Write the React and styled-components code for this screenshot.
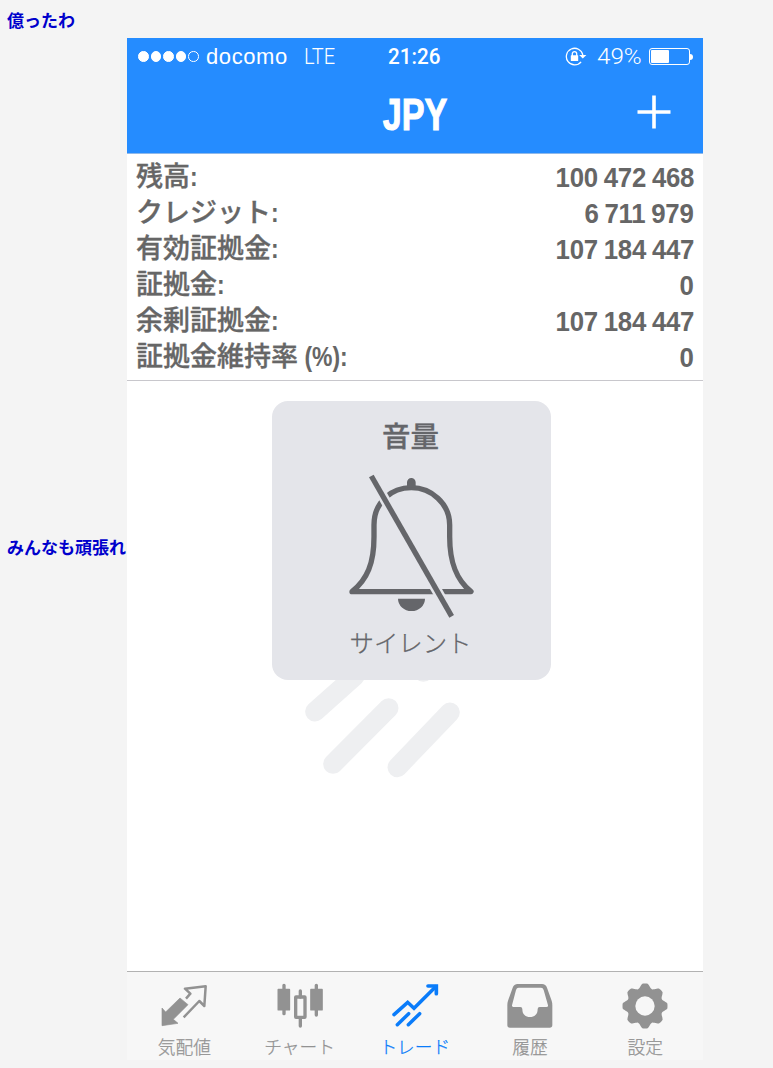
import React from "react";
import styled, { createGlobalStyle } from "styled-components";

const Global = createGlobalStyle`
  * { box-sizing: border-box; }
  body { margin: 0; background: #f4f4f4; }
`;

const sans = `"Liberation Sans", "Noto Sans CJK JP", sans-serif`;
const jp = `"Noto Sans CJK JP", sans-serif`;

const Page = styled.div`
  width: 773px;
  height: 1068px;
  padding-left: 7px;
  overflow: hidden;
  background: #f4f4f4;
`;

const LinkLine = styled.a`
  display: block;
  width: 120px;
  flex: none;
  padding-bottom: ${(p) => p.$lift || 0}px;
  font: bold 17px/20px ${jp};
  color: #0000cc;
  white-space: nowrap;
`;

const TopLine = styled.div`
  height: 38px;
  padding-top: 10px;
`;

const Row = styled.div`
  display: flex;
  align-items: center;
`;

const Phone = styled.div`
  display: flex;
  flex-direction: column;
  width: 576px;
  height: 1022px;
  background: #fff;
`;

const Header = styled.header`
  height: 116px;
  flex: none;
  background: #258cff;
  border-bottom: 1px solid #8fb9ea;
  color: #fff;
`;

const StatusBar = styled.div`
  display: grid;
  grid-template-columns: 1fr auto 1fr;
  align-items: center;
  height: 37px;
  padding: 0 10px 0 11px;
`;

const StatusGroup = styled.div`
  display: flex;
  align-items: center;
  justify-content: ${(p) => (p.$end ? "flex-end" : "flex-start")};
`;

const Dot = styled.span`
  width: 10.6px;
  height: 10.6px;
  margin-right: 2px;
  border-radius: 50%;
  border: 1px solid #fff;
  background: ${(p) => (p.$on ? "#fff" : "transparent")};
`;

const StatusText = styled.span`
  display: block;
  width: ${(p) => p.$w}px;
  margin-left: ${(p) => p.$gap || 0}px;
  font: ${(p) => p.$weight || 300} ${(p) => p.$size || 21}px/24px ${(p) => p.$family || "Roboto, sans-serif"};
  letter-spacing: ${(p) => p.$track || 0}px;
  white-space: nowrap;
  transform: scaleX(${(p) => p.$sx || 1});
  transform-origin: left center;
`;

const Battery = styled.div`
  width: 41px;
  height: 17px;
  margin-left: 7px;
  padding: 1px;
  border: 1px solid #fff;
  border-radius: 3px;
`;

const Charge = styled.div`
  width: 18px;
  height: 13px;
  border-radius: 1px;
  background: #fff;
`;

const BatteryTip = styled.div`
  width: 3px;
  height: 6px;
  border-radius: 0 3px 3px 0;
  background: #fff;
`;

const NavBar = styled.div`
  display: grid;
  grid-template-columns: 1fr auto 1fr;
  align-items: center;
  height: 78px;
  padding-right: 32px;
`;

const Title = styled.h1`
  grid-column: 2;
  margin: 2px -16px 0 16px;
  font: bold 43.5px/50px ${sans};
  -webkit-text-stroke: 1px #fff;
  transform: scaleX(0.785);
`;

const PlusIcon = styled.svg`
  justify-self: end;
  margin-top: -5px;
`;

const Summary = styled.section`
  height: 227px;
  flex: none;
  padding: 4px 9px 0;
  border-bottom: 1px solid #c8c7cc;
  color: #666;
`;

const SummaryRow = styled.div`
  display: flex;
  justify-content: space-between;
  height: 36px;
`;

const Label = styled.span`
  font: 500 27px/33px ${jp};
  -webkit-text-stroke: 0.35px #666;
  white-space: pre;
`;

const LabelTail = styled.span`
  display: inline-block;
  font: bold 27px/33px ${sans};
  -webkit-text-stroke: 0;
  transform: scaleX(0.85);
  transform-origin: left center;
`;

const Value = styled.span`
  font: bold 28.5px/38px ${sans};
  letter-spacing: -0.3px;
  word-spacing: -1px;
  white-space: nowrap;
  transform: scaleX(0.905);
  transform-origin: right center;
`;

const Content = styled.main`
  position: relative;
  flex: 1;
  padding: 20px 0 0 145px;
`;

const Watermark = styled.svg`
  position: absolute;
  left: 173px;
  top: 279px;
`;

const Hud = styled.div`
  position: relative;
  display: flex;
  flex-direction: column;
  align-items: center;
  width: 279px;
  height: 278.5px;
  padding: 16px 2px 0 0;
  border-radius: 16px;
  background: #e4e5ea;
  color: #65666a;
`;

const HudTitle = styled.div`
  font: 500 28.5px/36px ${jp};
  -webkit-text-stroke: 0.3px #65666a;
`;

const HudText = styled.div`
  margin-top: 4px;
  font: 300 24.4px/36px ${jp};
  -webkit-text-stroke: 0.3px #65666a;
`;

const BellIcon = styled.svg`
  margin-top: 20px;
  flex: none;
`;

const TabBar = styled.nav`
  display: flex;
  height: 89px;
  flex: none;
  border-top: 1px solid #b2b2b2;
  background: #f7f7f7;
`;

const Tab = styled.div`
  display: flex;
  flex: 1;
  flex-direction: column;
  align-items: center;
  padding: 9px 0.4px 0 0;
  color: ${(p) => (p.$active ? "#0a7cfa" : "#929292")};
`;

const TabLabel = styled.span`
  margin-top: 4px;
  font: 300 17.7px/26px ${jp};
  -webkit-text-stroke: 0.25px currentColor;
  white-space: nowrap;
`;

// Eight rounded teeth: a cosine-modulated radius, flattened at the tips.
const gearPoints = Array.from({ length: 160 }, (_, k) => {
  const t = (k / 160) * Math.PI * 2;
  const r = Math.min(67.5, 62.5 + 8 * Math.cos(8 * t));
  return `${(72 + r * Math.sin(t)).toFixed(1)},${(75 - r * Math.cos(t)).toFixed(1)}`;
}).join(" ");

const icons = {
  quotes: (
    <>
      <path d="M60 51 84 71 40 115 54 127 6 134 6 81 17 93Z" fill="currentColor" stroke="currentColor" strokeWidth="2" strokeLinejoin="round" />
      <path d="M78 53 91 38 75 23 137 16 133 75 118 60 71 109" fill="none" stroke="currentColor" strokeWidth="7.5" strokeLinejoin="round" />
    </>
  ),
  chart: (
    <g stroke="currentColor" strokeLinecap="round" fill="none">
      <path d="M24 13V98M121 13V102M73 30V48M73 110V135" strokeWidth="10" />
      <rect x="7" y="26" width="33" height="60" fill="currentColor" strokeWidth="5" strokeLinejoin="round" />
      <rect x="105" y="26" width="33" height="60" fill="currentColor" strokeWidth="5" strokeLinejoin="round" />
      <rect x="59" y="48" width="28" height="61" rx="1" strokeWidth="10" />
    </g>
  ),
  trade: (
    <g stroke="currentColor" strokeLinecap="round" fill="none">
      <path d="M9 101 50 64 69 82 134 17M19 131 53 98M52 131 86 98" strokeWidth="10.5" />
      <path d="M111 15H136V38" strokeWidth="11" />
    </g>
  ),
  history: (
    <path
      fill="currentColor"
      fillRule="evenodd"
      d="M35 9H108Q119 9 123 20L137 59Q139 65 139 73V132Q139 140 131 140H12Q4 140 4 132V73Q4 65 6 59L20 20Q24 9 35 9ZM38 20Q32 20 30 27L18 73Q17 78 22 78H43Q49 78 49 84C49 101 59 108 72 108S95 101 95 84Q95 78 101 78H121Q127 78 126 73L113 27Q111 20 105 20Z"
    />
  ),
  settings: (
    <>
      <polygon points={gearPoints} fill="currentColor" />
      <circle cx="72" cy="75" r="29" fill="#f7f7f7" />
    </>
  ),
};

const tabs = [
  ["quotes", "気配値"],
  ["chart", "チャート"],
  ["trade", "トレード"],
  ["history", "履歴"],
  ["settings", "設定"],
];

const rows = [
  ["残高", ":", "100 472 468"],
  ["クレジット", ":", "6 711 979"],
  ["有効証拠金", ":", "107 184 447"],
  ["証拠金", ":", "0"],
  ["余剰証拠金", ":", "107 184 447"],
  ["証拠金維持率", "\u00a0(%):", "0"],
];

export default function App() {
  return (
    <Page>
      <Global />
      <TopLine>
        <LinkLine>億ったわ</LinkLine>
      </TopLine>
      <Row>
        <LinkLine $lift={4}>みんなも頑張れ</LinkLine>
        <Phone>
          <Header>
            <StatusBar>
              <StatusGroup>
                {[1, 1, 1, 1, 0].map((on, i) => (
                  <Dot key={i} $on={on} />
                ))}
                <StatusText $w={82} $gap={5} $size={22} $track={0.6} $family={sans}>docomo</StatusText>
                <StatusText $w={32} $gap={16} $sx={0.93} $size={21.5}>LTE</StatusText>
              </StatusGroup>
              <StatusText $w={56} $size={21.5} $weight={500} $sx={0.96}>21:26</StatusText>
              <StatusGroup $end>
                <svg width="22" height="20" viewBox="0 0 22 20" fill="none" stroke="#fff">
                  <path d="M16.1 14.8A8.3 8.3 0 1 1 17.8 8" strokeWidth="1.3" />
                  <path d="M14.2 8H21.4L17.8 11.6Z" fill="#fff" stroke="none" />
                  <rect x="5.8" y="8.3" width="7.4" height="5.6" rx="0.5" fill="#fff" stroke="none" />
                  <path d="M7.3 9V6.8a2.2 2.2 0 0 1 4.4 0V9" strokeWidth="1.3" />
                </svg>
                <StatusText $w={45} $gap={10} $size={22} $sx={1.1}>49%</StatusText>
                <Battery>
                  <Charge />
                </Battery>
                <BatteryTip />
              </StatusGroup>
            </StatusBar>
            <NavBar>
              <Title>JPY</Title>
              <PlusIcon width="34" height="34" viewBox="0 0 34 34" stroke="#fff" strokeWidth="3.6">
                <path d="M0.5 17H33.5M17 0.5V33.5" />
              </PlusIcon>
            </NavBar>
          </Header>
          <Summary>
            {rows.map(([label, tail, value]) => (
              <SummaryRow key={label}>
                <Label>
                  {label}
                  <LabelTail>{tail}</LabelTail>
                </Label>
                <Value>{value}</Value>
              </SummaryRow>
            ))}
          </Summary>
          <Content>
            <Watermark width="165" height="120" viewBox="0 0 495 360" stroke="#eeeff1" strokeWidth="59" strokeLinecap="round">
              <path d="M45 155 165 48M99 312 266 144M292 322 450 157M370 35V36" />
            </Watermark>
            <Hud>
              <HudTitle>音量</HudTitle>
              <BellIcon width="126" height="147" viewBox="264 249 378 441" fill="none">
                <path
                  d="M276 605C322 568 342 520 342 440V405C342 335 395 293 454 293S569 340 569 405V440C569 520 590 570 633 605Z"
                  stroke="#65666a"
                  strokeWidth="16"
                  strokeLinejoin="round"
                />
                <path d="M441 292V277a13 13 0 0 1 26 0V292ZM414 626H495A40.5 37 0 0 1 414 626Z" fill="#65666a" />
                <path d="M334 258 575 679" stroke="#e4e5ea" strokeWidth="31" />
                <path d="M334 258 575 679" stroke="#65666a" strokeWidth="16" />
              </BellIcon>
              <HudText>サイレント</HudText>
            </Hud>
          </Content>
          <TabBar>
            {tabs.map(([icon, label]) => (
              <Tab key={icon} $active={icon === "trade"}>
                <svg width="48" height="48" viewBox="0 0 144 144">{icons[icon]}</svg>
                <TabLabel>{label}</TabLabel>
              </Tab>
            ))}
          </TabBar>
        </Phone>
      </Row>
    </Page>
  );
}
